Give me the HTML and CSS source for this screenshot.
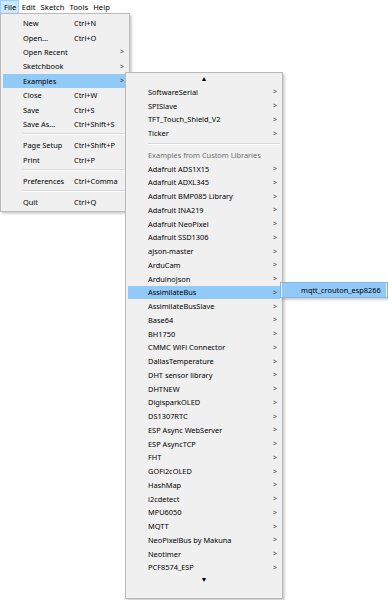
FILE: index.html
```html
<!DOCTYPE html>
<html lang="en">
<head>
  <meta charset="UTF-8" />
  <title>Arduino - File menu</title>
  <link rel="stylesheet" href="styles.css">
</head>
<body>

<div class="menubar">
  <span class="top active">File</span>
  <span class="top">Edit</span>
  <span class="top">Sketch</span>
  <span class="top">Tools</span>
  <span class="top">Help</span>
</div>

<!-- File menu -->
<div class="menu file-menu">
  <div class="item"><span class="label">New</span><span class="key">Ctrl+N</span></div>
  <div class="item"><span class="label">Open...</span><span class="key">Ctrl+O</span></div>
  <div class="item"><span class="label">Open Recent</span><span class="arrow">&gt;</span></div>
  <div class="item"><span class="label">Sketchbook</span><span class="arrow">&gt;</span></div>
  <div class="item hover"><span class="label">Examples</span><span class="arrow">&gt;</span></div>
  <div class="item"><span class="label">Close</span><span class="key">Ctrl+W</span></div>
  <div class="item"><span class="label">Save</span><span class="key">Ctrl+S</span></div>
  <div class="item"><span class="label">Save As...</span><span class="key">Ctrl+Shift+S</span></div>
  <div class="sep"></div>
  <div class="item"><span class="label">Page Setup</span><span class="key">Ctrl+Shift+P</span></div>
  <div class="item"><span class="label">Print</span><span class="key">Ctrl+P</span></div>
  <div class="sep"></div>
  <div class="item"><span class="label">Preferences</span><span class="key">Ctrl+Comma</span></div>
  <div class="sep"></div>
  <div class="item"><span class="label">Quit</span><span class="key">Ctrl+Q</span></div>
</div>

<!-- Examples submenu -->
<div class="menu examples-menu">
  <div class="scroll">&#9650;</div>
  <div class="item"><span class="label">SoftwareSerial</span><span class="arrow">&gt;</span></div>
  <div class="item"><span class="label">SPISlave</span><span class="arrow">&gt;</span></div>
  <div class="item"><span class="label">TFT_Touch_Shield_V2</span><span class="arrow">&gt;</span></div>
  <div class="item"><span class="label">Ticker</span><span class="arrow">&gt;</span></div>
  <div class="sep"></div>
  <div class="item header"><span class="label">Examples from Custom Libraries</span></div>
  <div class="item"><span class="label">Adafruit ADS1X15</span><span class="arrow">&gt;</span></div>
  <div class="item"><span class="label">Adafruit ADXL345</span><span class="arrow">&gt;</span></div>
  <div class="item"><span class="label">Adafruit BMP085 Library</span><span class="arrow">&gt;</span></div>
  <div class="item"><span class="label">Adafruit INA219</span><span class="arrow">&gt;</span></div>
  <div class="item"><span class="label">Adafruit NeoPixel</span><span class="arrow">&gt;</span></div>
  <div class="item"><span class="label">Adafruit SSD1306</span><span class="arrow">&gt;</span></div>
  <div class="item"><span class="label">aJson-master</span><span class="arrow">&gt;</span></div>
  <div class="item"><span class="label">ArduCam</span><span class="arrow">&gt;</span></div>
  <div class="item"><span class="label">ArduinoJson</span><span class="arrow">&gt;</span></div>
  <div class="item hover"><span class="label">AssimilateBus</span><span class="arrow">&gt;</span></div>
  <div class="item"><span class="label">AssimilateBusSlave</span><span class="arrow">&gt;</span></div>
  <div class="item"><span class="label">Base64</span><span class="arrow">&gt;</span></div>
  <div class="item"><span class="label">BH1750</span><span class="arrow">&gt;</span></div>
  <div class="item"><span class="label">CMMC WiFi Connector</span><span class="arrow">&gt;</span></div>
  <div class="item"><span class="label">DallasTemperature</span><span class="arrow">&gt;</span></div>
  <div class="item"><span class="label">DHT sensor library</span><span class="arrow">&gt;</span></div>
  <div class="item"><span class="label">DHTNEW</span><span class="arrow">&gt;</span></div>
  <div class="item"><span class="label">DigisparkOLED</span><span class="arrow">&gt;</span></div>
  <div class="item"><span class="label">DS1307RTC</span><span class="arrow">&gt;</span></div>
  <div class="item"><span class="label">ESP Async WebServer</span><span class="arrow">&gt;</span></div>
  <div class="item"><span class="label">ESP AsyncTCP</span><span class="arrow">&gt;</span></div>
  <div class="item"><span class="label">FHT</span><span class="arrow">&gt;</span></div>
  <div class="item"><span class="label">GOFi2cOLED</span><span class="arrow">&gt;</span></div>
  <div class="item"><span class="label">HashMap</span><span class="arrow">&gt;</span></div>
  <div class="item"><span class="label">i2cdetect</span><span class="arrow">&gt;</span></div>
  <div class="item"><span class="label">MPU6050</span><span class="arrow">&gt;</span></div>
  <div class="item"><span class="label">MQTT</span><span class="arrow">&gt;</span></div>
  <div class="item"><span class="label">NeoPixelBus by Makuna</span><span class="arrow">&gt;</span></div>
  <div class="item"><span class="label">Neotimer</span><span class="arrow">&gt;</span></div>
  <div class="item"><span class="label">PCF8574_ESP</span><span class="arrow">&gt;</span></div>
  <div class="scroll">&#9660;</div>
</div>

<!-- AssimilateBus submenu -->
<div class="menu bus-menu">
  <div class="item hover"><span class="label">mqtt_crouton_esp8266</span></div>
</div>

</body>
</html>
```

FILE: styles.css
```css
body {
  margin: 0;
  background: white;
  font-family: "Noto Sans", "Open Sans", sans-serif;
  font-size: 7.4px;
  color: #000;
}
.menubar {
  display: flex;
  height: 14px;
  font-size: 7.7px;
  background: white;
}
.top {
  padding: 0 1.5px;
  border: 1px solid transparent;
  line-height: 12px;
}
.top:first-child {
  padding: 0 2px 0 3px;
}
.top.active {
  background: #cce8ff;
  border-color: #99d1ff;
}
.menu {
  position: absolute;
  background: #f0f0f0;
  border: 1px solid #b9b9b9;
  box-shadow: 2px 2px 2px rgba(0,0,0,0.18);
  box-sizing: border-box;
}
.item {
  display: flex;
  align-items: center;
  height: 14.4px;
  padding-left: 20px;
  padding-right: 3px;
  white-space: nowrap;
}
.item .label {
  flex: 0 0 auto;
}
.item .arrow {
  margin-left: auto;
  color: #444;
  font-size: 7px;
}
.item.hover {
  background: #91c9f7;
}
.sep {
  height: 1px;
  background: #d7d7d7;
  margin: 2px 0 3px 20px;
  border-bottom: 1px solid #fff;
}
.file-menu {
  left: 0;
  top: 13px;
  width: 130px;
  padding: 2px 2px 1px;
}
.file-menu .label {
  width: 51px;
}
.examples-menu {
  left: 125px;
  top: 72px;
  width: 158px;
  height: 527px;
  padding: 0 2px;
}
.examples-menu .item {
  height: 13.75px;
}
.examples-menu .sep {
  margin: 3px 0 3px 20px;
}
.item.header {
  color: #6d6d6d;
}
.scroll {
  text-align: center;
  font-size: 7px;
  height: 12px;
  line-height: 12px;
}
.bus-menu {
  left: 280px;
  top: 282px;
  width: 108px;
  padding: 0 1px;
  border-color: #7eb4ea;
}
.bus-menu .item {
  height: 14px;
  padding-left: 19px;
}
```
